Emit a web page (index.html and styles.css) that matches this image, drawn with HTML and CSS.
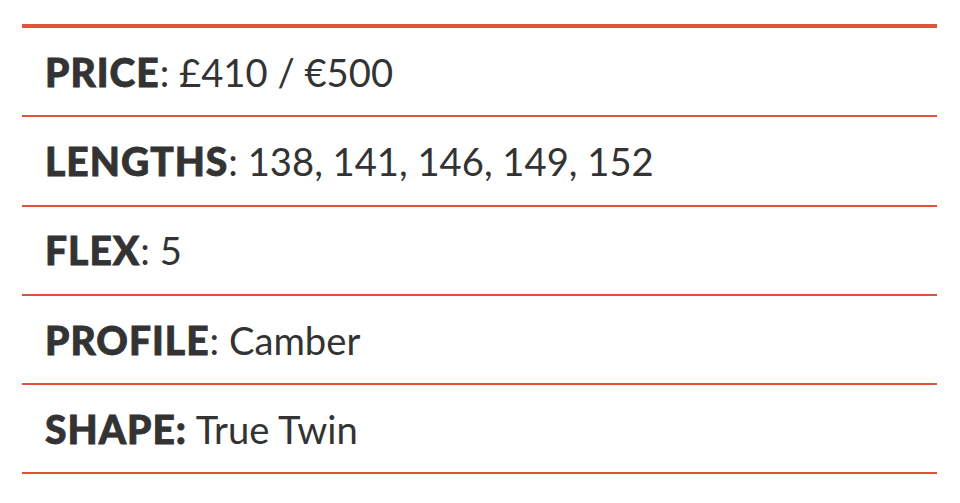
FILE: index.html
```html
<!DOCTYPE html>
<html lang="en">
<head>
<meta charset="utf-8">
<title>Specs</title>
<link rel="stylesheet" href="styles.css">
</head>
<body>
<div class="specs">
  <div class="row"><span class="label">PRICE</span>: £410 / €500</div>
  <div class="row"><span class="label">LENGTHS</span>: 138, 141, 146, 149, 152</div>
  <div class="row"><span class="label">FLEX</span>: 5</div>
  <div class="row"><span class="label">PROFILE</span>: Camber</div>
  <div class="row"><span class="label">SHAPE:</span> True Twin</div>
</div>
</body>
</html>
```
FILE: styles.css
```css
html, body {
  margin: 0;
  padding: 0;
  background: #ffffff;
}
.specs {
  margin: 24px 23px 0 22px;
  border-top: 4px solid #e0533b;
  font-family: Lato, "Liberation Sans", sans-serif;
  color: #333333;
}
.row {
  height: 87.3px;
  display: flex;
  align-items: center;
  padding-left: 23px;
  border-bottom: 2px solid #e0533b;
  font-size: 38.2px;
  font-weight: 400;
  white-space: pre;
}
.label {
  font-size: 39px;
  font-weight: 900;
  letter-spacing: 1px;
  -webkit-text-stroke: 0.8px #333333;
}
```
